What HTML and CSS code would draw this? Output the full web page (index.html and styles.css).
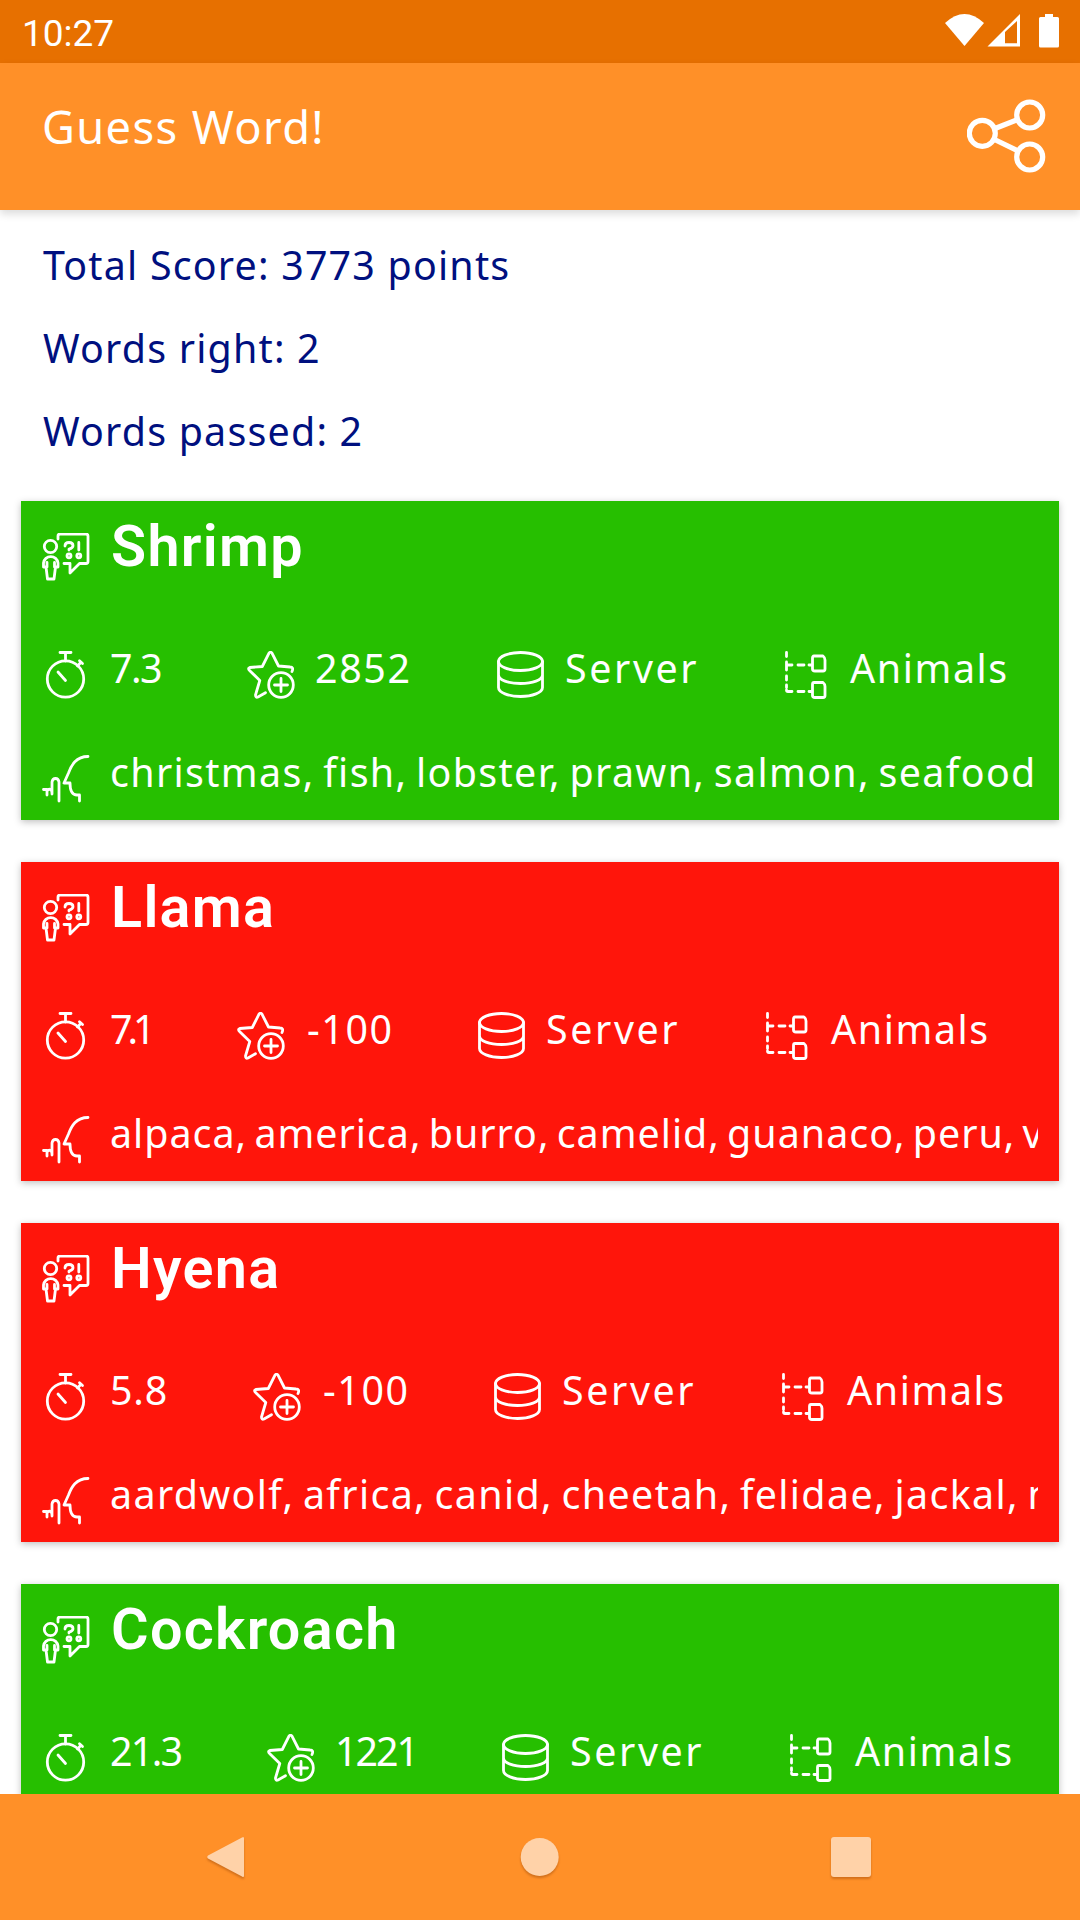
FILE: index.html
```html
<!DOCTYPE html>
<html lang="en">
<head>
<meta charset="utf-8">
<title>Guess Word!</title>
<link rel="stylesheet" href="styles.css">
</head>
<body>
<svg class="sprite" aria-hidden="true">
  <symbol id="person" viewBox="0 0 48 48"><circle cx="8.500" cy="13.500" r="6.200"/><path d="M1.500 34v-4a7.300 7.300 0 0 1 14.500 0v4h-2.500l-1.500 12H5.500L4 34zM5 29.500V34M12.500 29.500V34M16 6V3q0-2 2-2h26q2 0 2 2v25.500q0 2-2 2h-6.500l-9.500 9.500v-9.500h-6"/><path d="M23 13q0-3.500 4-3.500t4 3.200q0 2.300-4 3.300v1M36.800 9.500V17"/><circle class="dot" cx="27" cy="22.800" r="2"/><circle class="dot" cx="36.800" cy="22.800" r="2"/></symbol>
  <symbol id="watch" viewBox="0 0 48 48"><circle cx="23.500" cy="28" r="18.200"/><path d="M18 1.500h11M23.500 1.500V10M35.500 15l3.500-3.800M37.500 9.800l3 2.800M16 21l7.500 8.500"/></symbol>
  <symbol id="star" viewBox="0 0 48 48"><path d="M45 20.500q2-4.500-2-4.500L31.500 15 25 2.200q-1.500-2-3 0L15.300 15.500l-12.500 1q-2.500 1 0 3.200l10 9.800L8.500 44q0 3 2.500 2l7.500-4.300"/><circle cx="34" cy="34" r="12.300"/><path d="M27.500 34h13M34 27.500v13"/></symbol>
  <symbol id="database" viewBox="0 0 48 48"><ellipse cx="23.500" cy="10.500" rx="22" ry="9"/><path d="M1.500 10.500v26c0 5 10 9 22 9s22-4 22-9v-26M1.500 24c0 5 10 8.500 22 8.500s22-3.500 22-8.500"/></symbol>
  <symbol id="tree" viewBox="0 0 48 48"><path d="M4.500 1.500v4M4.500 11v8M4.500 25v4M4.500 34v2.500M4.500 39q0 1.500 1.500 1.500h4M4.500 14h5.500M16 14h6M27 14h3M16 40.500h6M27 40.500h3"/><path d="M32 5h9q2 1.500 2 4v9q0 2-2 2h-8q-2.500 0-2.500-2V7q0-2 1.500-2zM32 31.500h9q2 1.500 2 4v9q0 2-2 2h-8q-2.500 0-2.500-2v-11q0-2 1.500-2z"/></symbol>
  <symbol id="hint" viewBox="0 0 48 48"><path d="M46 1.500C34 1.500 29.500 10 26.500 18L22 28h6q0 12 7 12h2.500V46M17 46V27q-.5-3.500-3.500-3.500T10 27v12M10 38c0-4-3-5-5-2V40M1.500 34.500h3.500"/></symbol>
</svg>

<header class="status">
  <span class="clock">10:27</span>
  <svg class="status-icons" viewBox="0 0 115 36">
    <path d="M0 9Q19.500-9 39 9L19.500 32z"/>
    <path fill-rule="evenodd" d="M42.500 32.500L75 0v32.500zM60 18v11.300h12V7z"/>
    <path d="M100 0h8v3h4.500q1.500 0 1.500 1.500V32q0 1.500-1.500 1.500h-17Q94 33.500 94 32V4.500Q94 3 95.500 3h4.500z"/>
  </svg>
</header>

<div class="appbar">
  <h1 class="appbar-title">Guess Word!</h1>
  <svg class="share" viewBox="0 0 80 76"><circle cx="15.300" cy="35.300" r="13"/><circle cx="62.700" cy="17" r="13"/><circle cx="62.700" cy="59" r="13"/><path d="M28 30.500l23-9M27.500 41.500L51 53"/></svg>
</div>

<main class="content">
  <section class="summary">
    <p>Total Score: 3773 points</p>
    <p>Words right: 2</p>
    <p>Words passed: 2</p>
  </section>

  <article class="card correct">
    <div class="line title-line"><svg class="icon"><use href="#person"/></svg><h2 class="word">Shrimp</h2></div>
    <div class="line stats">
      <svg class="icon"><use href="#watch"/></svg><span class="time">7.3</span>
      <svg class="icon"><use href="#star"/></svg><span class="score">2852</span>
      <svg class="icon"><use href="#database"/></svg><span class="source">Server</span>
      <svg class="icon"><use href="#tree"/></svg><span class="category">Animals</span>
    </div>
    <div class="line"><svg class="icon"><use href="#hint"/></svg><p class="hints">christmas, fish, lobster, prawn, salmon, seafood</p></div>
  </article>

  <article class="card passed llama-card">
    <div class="line title-line"><svg class="icon"><use href="#person"/></svg><h2 class="word">Llama</h2></div>
    <div class="line stats">
      <svg class="icon"><use href="#watch"/></svg><span class="time">7.1</span>
      <svg class="icon"><use href="#star"/></svg><span class="score">-100</span>
      <svg class="icon"><use href="#database"/></svg><span class="source">Server</span>
      <svg class="icon"><use href="#tree"/></svg><span class="category">Animals</span>
    </div>
    <div class="line"><svg class="icon"><use href="#hint"/></svg><p class="hints">alpaca, america, burro, camelid, guanaco, peru, vicuna</p></div>
  </article>

  <article class="card passed hyena-card">
    <div class="line title-line"><svg class="icon"><use href="#person"/></svg><h2 class="word">Hyena</h2></div>
    <div class="line stats">
      <svg class="icon"><use href="#watch"/></svg><span class="time">5.8</span>
      <svg class="icon"><use href="#star"/></svg><span class="score">-100</span>
      <svg class="icon"><use href="#database"/></svg><span class="source">Server</span>
      <svg class="icon"><use href="#tree"/></svg><span class="category">Animals</span>
    </div>
    <div class="line"><svg class="icon"><use href="#hint"/></svg><p class="hints">aardwolf, africa, canid, cheetah, felidae, jackal, mammal</p></div>
  </article>

  <article class="card correct cockroach-card">
    <div class="line title-line"><svg class="icon"><use href="#person"/></svg><h2 class="word">Cockroach</h2></div>
    <div class="line stats">
      <svg class="icon"><use href="#watch"/></svg><span class="time">21.3</span>
      <svg class="icon"><use href="#star"/></svg><span class="score">1221</span>
      <svg class="icon"><use href="#database"/></svg><span class="source">Server</span>
      <svg class="icon"><use href="#tree"/></svg><span class="category">Animals</span>
    </div>
  </article>
</main>

<nav class="navbar">
  <svg viewBox="0 0 40 60"><path d="M35 10.500q2-1.500 2 1v37q0 2.500-2 1L1 31.500q-1.500-1.500 0-3z"/></svg>
  <svg viewBox="0 0 40 60"><circle cx="20.700" cy="30" r="19"/></svg>
  <svg viewBox="0 0 40 60"><rect y="10" width="40" height="40" rx="3"/></svg>
</nav>
</body>
</html>
```
FILE: styles.css
```css
* { box-sizing: border-box; margin: 0; padding: 0; }

body {
  display: flex;
  flex-direction: column;
  width: 1080px;
  height: 1920px;
  overflow: hidden;
  background: #fff;
  font-family: "Noto Sans", "Liberation Sans", sans-serif;
  font-size: 39.4px;
}

.sprite { display: none; }

.status {
  display: flex;
  flex: none;
  height: 63px;
  align-items: flex-start;
  justify-content: space-between;
  padding: 0 20px 0 22px;
  background: #e77000;
  color: #fff;
}
.clock { font-family: Roboto, sans-serif; font-size: 37px; line-height: 67px; }
.status-icons { width: 115px; height: 36px; margin-top: 14px; fill: #fff; }

.appbar {
  display: flex;
  flex: none;
  height: 147px;
  align-items: flex-start;
  justify-content: space-between;
  padding: 0 33px 0 42px;
  background: #ff9028;
  color: #fff;
  box-shadow: 0 4px 8px rgba(0, 0, 0, .14);
  z-index: 1;
}
.appbar-title { font-size: 45.2px; font-weight: 400; line-height: 60px; letter-spacing: 1.4px; margin-top: 34px; }
.share { width: 80px; height: 76px; margin-top: 35px; fill: none; stroke: #fff; stroke-width: 5.2; }

.content { flex: 1; min-height: 0; overflow: hidden; padding: 14px 21px 0; }

.summary { padding: 0 22px; height: 277px; color: #00107f; line-height: 83px; letter-spacing: 1.2px; }

.card {
  height: 319px;
  margin-bottom: 42px;
  padding: 0 21px;
  color: #fff;
  box-shadow: 0 2px 7px rgba(0, 0, 0, .25);
}
.correct { background: #26bf00; }
.passed { background: #ff150b; }

.line { display: flex; height: 104px; align-items: flex-start; white-space: nowrap; }
.icon {
  flex: none;
  width: 48px;
  height: 48px;
  margin: 46px 20px 0 0;
  overflow: visible;
  fill: none;
  stroke: #fff;
  stroke-width: 2.8;
  stroke-linecap: round;
  stroke-linejoin: round;
}
.icon .dot { fill: #fff; stroke: none; }
.title-line .icon { margin-top: 32px; }
.line > span, .hints { flex: none; line-height: 60px; margin-top: 33px; }

.word { font-family: Roboto, sans-serif; font-size: 57.5px; font-weight: 600; line-height: 80px; letter-spacing: 1.3px; margin: 6px 0 0 1px; }

.stats { letter-spacing: 1.600px; }
.stats .time { width: 52px; margin-right: 85px; letter-spacing: -1.500px; }
.stats .score { width: 97px; margin-right: 85px; }
.stats .source { width: 132px; margin-right: 85px; letter-spacing: 2.600px; }
.line > .hints { flex: 1; overflow: hidden; letter-spacing: 1.350px; word-spacing: -3px; }

.llama-card .time { width: 42px; letter-spacing: -5px; }
.llama-card .score { width: 88px; text-indent: 2px; }
.llama-card .line > .hints { letter-spacing: 1px; word-spacing: -4px; }
.hyena-card .time { width: 58px; letter-spacing: .8px; }
.hyena-card .score { width: 88px; text-indent: 2px; }
.cockroach-card .time { width: 72px; letter-spacing: -1.700px; }
.cockroach-card .score { width: 82px; letter-spacing: -2px; }

.navbar {
  display: flex;
  flex: 0 0 126px;
  align-items: center;
  justify-content: space-between;
  padding: 0 209px 0 207px;
  background: #ff9028;
}
.navbar svg { width: 40px; height: 60px; fill: #ffd2a8; filter: drop-shadow(0 2px 1px rgba(120, 50, 0, .35)); }
```
